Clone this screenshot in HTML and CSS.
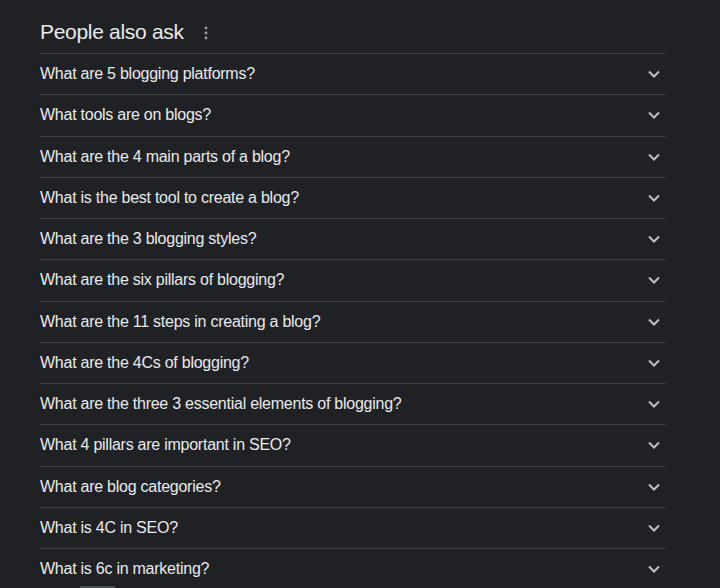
FILE: index.html
```html
<!DOCTYPE html>
<html lang="en">
<head>
    <meta charset="UTF-8">
    <title>People also ask</title>
    <link rel="stylesheet" href="styles.css">
</head>
<body>
<div class="paa">
    <div class="paa-header">
        <h2>People also ask</h2>
        <svg class="more" width="4" height="14" viewBox="0 0 4 14">
            <circle cx="2" cy="2" r="1.4"/>
            <circle cx="2" cy="7" r="1.4"/>
            <circle cx="2" cy="12" r="1.4"/>
        </svg>
    </div>
    <div class="question"><span>What are 5 blogging platforms?</span><svg class="chev" viewBox="0 0 12 8"><path d="M1 1.5l5 5 5-5"/></svg></div>
    <div class="question"><span>What tools are on blogs?</span><svg class="chev" viewBox="0 0 12 8"><path d="M1 1.5l5 5 5-5"/></svg></div>
    <div class="question"><span>What are the 4 main parts of a blog?</span><svg class="chev" viewBox="0 0 12 8"><path d="M1 1.5l5 5 5-5"/></svg></div>
    <div class="question"><span>What is the best tool to create a blog?</span><svg class="chev" viewBox="0 0 12 8"><path d="M1 1.5l5 5 5-5"/></svg></div>
    <div class="question"><span>What are the 3 blogging styles?</span><svg class="chev" viewBox="0 0 12 8"><path d="M1 1.5l5 5 5-5"/></svg></div>
    <div class="question"><span>What are the six pillars of blogging?</span><svg class="chev" viewBox="0 0 12 8"><path d="M1 1.5l5 5 5-5"/></svg></div>
    <div class="question"><span>What are the 11 steps in creating a blog?</span><svg class="chev" viewBox="0 0 12 8"><path d="M1 1.5l5 5 5-5"/></svg></div>
    <div class="question"><span>What are the 4Cs of blogging?</span><svg class="chev" viewBox="0 0 12 8"><path d="M1 1.5l5 5 5-5"/></svg></div>
    <div class="question"><span>What are the three 3 essential elements of blogging?</span><svg class="chev" viewBox="0 0 12 8"><path d="M1 1.5l5 5 5-5"/></svg></div>
    <div class="question"><span>What 4 pillars are important in SEO?</span><svg class="chev" viewBox="0 0 12 8"><path d="M1 1.5l5 5 5-5"/></svg></div>
    <div class="question"><span>What are blog categories?</span><svg class="chev" viewBox="0 0 12 8"><path d="M1 1.5l5 5 5-5"/></svg></div>
    <div class="question"><span>What is 4C in SEO?</span><svg class="chev" viewBox="0 0 12 8"><path d="M1 1.5l5 5 5-5"/></svg></div>
    <div class="question last"><span>What is 6c in marketing?</span><svg class="chev" viewBox="0 0 12 8"><path d="M1 1.5l5 5 5-5"/></svg>
        <div class="scroll-hint"></div>
    </div>
</div>
</body>
</html>
```
FILE: styles.css
```css
/* Page */
body {
    margin: 0;
    background-color: #202124;
    color: #e8eaed;
    font-family: Arial, "Liberation Sans", sans-serif;
    height: 588px;
    overflow: hidden;
}

/* People also ask block */
.paa {
    width: 626px;
    margin-left: 40px;
}

.paa-header {
    height: 54px;
    display: flex;
    align-items: center;
    gap: 20px;
    border-bottom: 1px solid #3c4043;
    box-sizing: border-box;
    padding-top: 10px;
}

.paa-header h2 {
    margin: 0;
    font-size: 21px;
    font-weight: normal;
    letter-spacing: -0.3px;
    color: #e8eaed;
}

.more {
    fill: #9aa0a6;
    margin-top: 2px;
}

/* Question rows */
.question {
    height: 41.25px;
    box-sizing: border-box;
    border-bottom: 1px solid #3c4043;
    display: flex;
    align-items: center;
    justify-content: space-between;
    font-size: 16px;
    letter-spacing: -0.25px;
    padding-right: 6px;
}

.question.last {
    position: relative;
}

.chev {
    width: 12px;
    height: 8px;
    fill: none;
    stroke: #bdc1c6;
    stroke-width: 2;
}

/* little grey tab at the bottom edge */
.scroll-hint {
    position: absolute;
    left: 40px;
    top: 37px;
    width: 35px;
    height: 3px;
    background-color: #4a4d51;
}
```
